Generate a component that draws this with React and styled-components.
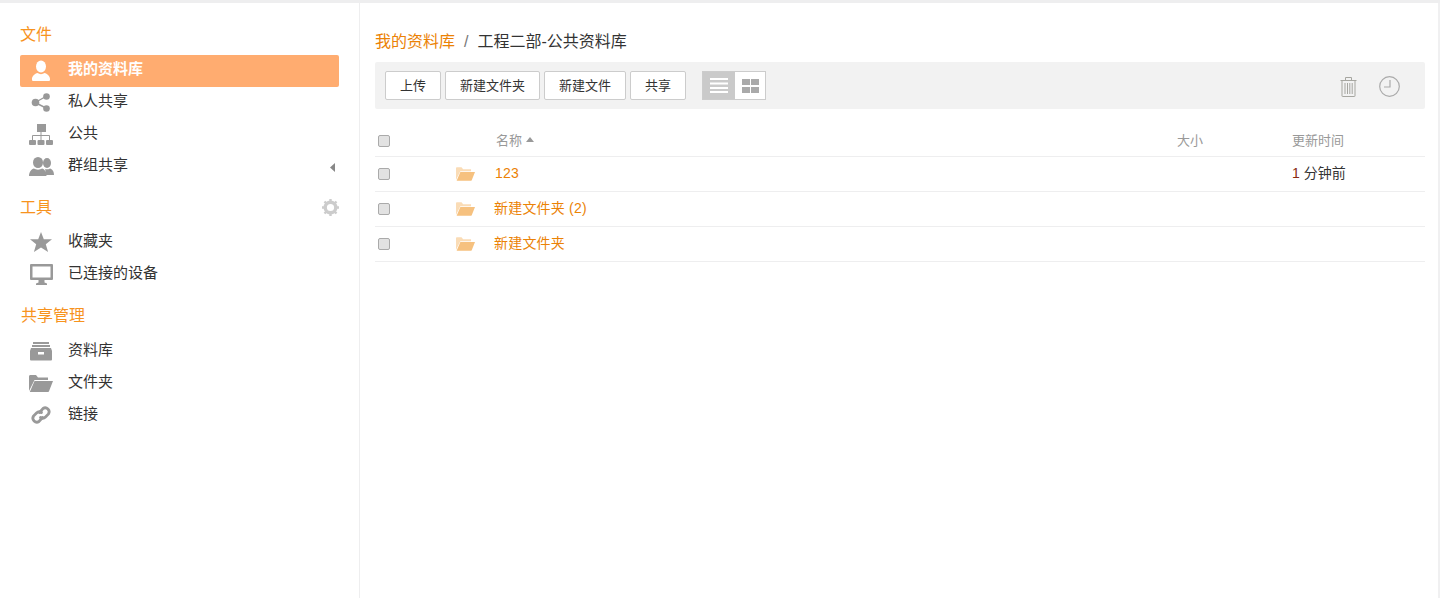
import React from "react";
import styled, { createGlobalStyle } from "styled-components";

const Global = createGlobalStyle`
  html, body { margin: 0; padding: 0; height: 100%; background: #fff; overflow: hidden; }
  body { font-family: "Liberation Sans", "Noto Sans CJK SC", sans-serif; font-size: 14px; color: #333; }
  * { box-sizing: border-box; }
`;

const Page = styled.div`
  height: 598px;
  width: 1440px;
  border-top: 3px solid #eeeeef;
  display: flex;
`;
const Side = styled.aside`
  width: 360px;
  flex: none;
  border-right: 1px solid #eeeeef;
  padding: 20px 20px 0;
`;
const Heading = styled.h3`
  margin: ${p => p.$mt || 0}px 0 ${p => p.$mb || 9}px ${p => p.$ml || 0}px;
  height: 23px;
  line-height: 23px;
  font-size: 16px;
  font-weight: 400;
  color: #f7931e;
  display: flex;
  justify-content: space-between;
  align-items: center;
`;
const Row = styled.div`
  height: 32px;
  display: flex;
  align-items: center;
  border-radius: 2px;
  padding-right: 4px;
  font-size: 15px;
  background: ${p => (p.$active ? "#ffac70" : "transparent")};
  color: ${p => (p.$active ? "#fff" : "#333")};
  font-weight: ${p => (p.$active ? 700 : 400)};
`;
const IconSlot = styled.span`
  width: 48px;
  flex: none;
  display: flex;
  justify-content: center;
  padding: 0 6px 2px 0;
`;
const Label = styled.span`
  flex: 1;
  padding-bottom: 4px;
  line-height: 20px;
`;
const Main = styled.main`
  flex: 1;
  padding: 23px 13px 0 15px;
  border-right: 2px solid #f0f0f1;
  min-width: 0;
`;
const Crumb = styled.div`
  height: 32px;
  line-height: 32px;
  font-size: 16px;
  margin-bottom: 4px;
  color: #333;
`;
const CrumbLink = styled.span`
  color: #eb8205;
`;
const Sep = styled.span`
  color: #777;
  margin: 0 9px;
`;
const Toolbar = styled.div`
  height: 47px;
  background: #f2f2f2;
  border-radius: 2px;
  padding: 9px 25px 0 10px;
  display: flex;
  align-items: flex-start;
`;
const Btn = styled.button`
  height: 29px;
  width: ${p => p.$w}px;
  margin-right: 4px;
  padding: 0 0 2px;
  background: #fff;
  border: 1px solid #ccc;
  border-radius: 2px;
  font: 13px "Liberation Sans", "Noto Sans CJK SC", sans-serif;
  color: #333;
`;
const Toggle = styled.div`
  display: flex;
  margin-left: 12px;
  border: 1px solid #ccc;
  height: 29px;
  background: #fff;
`;
const ToggleCell = styled.span`
  width: ${p => p.$w}px;
  display: flex;
  align-items: center;
  justify-content: center;
  background: ${p => (p.$on ? "#cacaca" : "#fff")};
`;
const Tools = styled.div`
  margin-left: auto;
  display: flex;
  align-items: center;
  gap: 22px;
  height: 31px;
`;
const TableRow = styled.div`
  display: grid;
  grid-template-columns: 78px 39px 682px 115px 1fr;
  align-items: center;
  height: ${p => p.$h || 35}px;
  border-bottom: 1px solid #eeeeef;
  padding-left: 3px;
`;
const HeaderCell = styled.span`
  font-size: 13px;
  color: #999;
  display: flex;
  align-items: center;
  gap: 4px;
  padding-bottom: 3px;
  margin-left: ${p => p.$ml || 0}px;
`;
const Check = styled.span`
  width: 12px;
  height: 12px;
  border: 1px solid #aaa;
  border-radius: 2px;
  background: #e2e2e2;
  display: block;
`;
const Name = styled.span`
  color: #eb8205;
  letter-spacing: .2px;
  margin-left: ${p => (p.$tight ? -1 : 0)}px;
  padding-bottom: ${p => (p.$tight ? 5 : 3)}px;
`;
const Time = styled.span`
  color: #333;
  padding-bottom: 5px;
`;
const Num = styled.span`
  color: #8a2a10;
`;
const HeaderRow = styled(TableRow)`
  margin-top: 15px;
  padding-top: 1px;
`;

const Ic = ({ w = 24, h = 24, vb = "0 0 24 24", children }) => (
  <svg width={w} height={h} viewBox={vb} style={{ display: "block" }}>{children}</svg>
);

const User = () => (
  <Ic w={20} h={21} vb="0 0 20 21">
    <ellipse cx="10" cy="6.500" rx="5" ry="6" fill="#fff" />
    <path d="M1 20c-.4-4 3-6.500 5.500-7 2 1.500 5 1.500 7 0 2.500.5 5.900 3 5.500 7 0 .5-.5 1-1.500 1H2.500C1.500 21 1 20.500 1 20z" fill="#fff" />
  </Ic>
);
const Share = () => (
  <Ic w={20} h={19} vb="0 0 20 19">
    <g fill="#999">
      <circle cx="4.500" cy="9.500" r="3.800" /><circle cx="15.500" cy="3.500" r="3.300" /><circle cx="15.500" cy="15.500" r="3.300" />
    </g>
    <path d="M5 9L14 4M5 10l10 5" stroke="#999" strokeWidth="1.400" />
  </Ic>
);
const Org = () => (
  <Ic w={24} h={21} vb="0 0 24 21">
    <g fill="#999">
      <rect x="8" y="0" width="9" height="8" />
      <rect x="0" y="16" width="7" height="5" rx="1" /><rect x="8.500" y="16" width="7" height="5" rx="1" /><rect x="17" y="16" width="7" height="5" rx="1" />
    </g>
    <path d="M3.500 16v-4.500h17V16M12 8v8" fill="none" stroke="#999" strokeWidth="1" />
  </Ic>
);
const Group = () => (
  <Ic w={25} h={19} vb="0 0 25 19">
    <g fill="#999">
      <ellipse cx="18" cy="6" rx="4" ry="5" />
      <path d="M15 18h10c0-4-2-6-4-6.500-1.500 1-4 1-5 .5 1 2 0 4-1 6z" />
      <ellipse cx="9" cy="5.500" rx="5" ry="5.500" />
      <path d="M0 19c0-4 2.500-7 5-7.500 2 1.500 6 1.500 8 0 2.500.5 4.500 3.500 4.500 7.500z" />
    </g>
  </Ic>
);
const Star = () => (
  <Ic w={22} h={20} vb="0 0 22 20"><path d="M11 0l2.800 7.200H22l-6.200 5 2.300 7.800L11 15.500 3.900 20l2.300-7.800L0 7.200h8.200z" fill="#999" /></Ic>
);
const Monitor = () => (
  <Ic w={23} h={21} vb="0 0 23 21">
    <path d="M1 0h21a1 1 0 0 1 1 1v14a1 1 0 0 1-1 1h-7.500v2.500l2.500 1V21H6v-1.500l2.500-1V16H1a1 1 0 0 1-1-1V1a1 1 0 0 1 1-1zm1.500 2.500v11h18v-11z" fill="#999" fillRule="evenodd" />
  </Ic>
);
const Archive = () => (
  <Ic w={22} h={19} vb="0 0 22 19">
    <g fill="#999">
      <rect x="3" y="0" width="16" height="2" />
      <rect x="2" y="3" width="18" height="2" />
      <path d="M1 6h20l1 3v8.500a1 1 0 0 1-1 1H1a1 1 0 0 1-1-1V9z" />
    </g>
    <rect x="8" y="10" width="6" height="2.500" fill="#fff" />
  </Ic>
);
const FolderOpen = ({ color = "#999", hi = "#999", w = 24, h = 17 }) => (
  <Ic w={w} h={h} vb="0 0 24 17">
    <path d="M0 16V1.500C0 .7.500 0 1.500 0H7l2 2.500h10V5H5.500z" fill={hi} />
    <path d="M5.500 6H24l-4 10.200a1 1 0 0 1-1 .8H0.800z" fill={color} />
  </Ic>
);
const Link = () => (
  <Ic w={22} h={22} vb="0 0 22 22">
    <g fill="none" stroke="#999" strokeWidth="2.800" strokeLinecap="round">
      <path d="M9.500 8.500l3.500-4a4 4 0 0 1 5.500 5.500l-3 3a4 4 0 0 1-5 .5" />
      <path d="M12.500 13.500l-3.500 4A4 4 0 0 1 3.500 12l3-3a4 4 0 0 1 5-.5" />
    </g>
  </Ic>
);
const Gear = () => (
  <Ic w={17} h={17} vb="0 0 17 17">
    <circle cx="8.500" cy="8.500" r="5.300" fill="none" stroke="#ccc" strokeWidth="3.400" />
    <path d="M8.500 0v17M0 8.500h17M2.500 2.500l12 12M14.500 2.500l-12 12" stroke="#ccc" strokeWidth="2.400" strokeDasharray="2.600 11.800 2.600" />
  </Ic>
);
const Caret = () => (
  <Ic w={5} h={9} vb="0 0 5 9"><path d="M5 0v9L0 4.500z" fill="#888" /></Ic>
);
const ListIc = () => (
  <Ic w={18} h={15} vb="0 0 18 15">
    <path d="M0 1h18M0 5.500h18M0 10h18M0 14h18" stroke="#fff" strokeWidth="2" />
  </Ic>
);
const GridIc = () => (
  <Ic w={17} h={14} vb="0 0 17 14">
    <g fill="#aaa">
      <rect x="0" y="0" width="8" height="6" /><rect x="9" y="0" width="8" height="6" />
      <rect x="0" y="8" width="8" height="6" /><rect x="9" y="8" width="8" height="6" />
    </g>
  </Ic>
);
const Trash = () => (
  <Ic w={17} h={20} vb="0 0 17 20">
    <g fill="none" stroke="#a6a6a0" strokeWidth="1">
      <path d="M.5 3.500h16M5.500 3.500V.5h6v3" />
      <path d="M2 3.500v15.500a.5.5 0 0 0 .5.500h12a.5.5 0 0 0 .5-.5V3.500" />
      <path d="M5 6v11M7.500 6v11M9.800 6v11M12.200 6v11" />
    </g>
  </Ic>
);
const Clock = () => (
  <Ic w={21} h={21} vb="0 0 21 21">
    <circle cx="10.500" cy="10.500" r="9.800" fill="none" stroke="#aaa" strokeWidth="1.200" />
    <path d="M11 4v7H5" fill="none" stroke="#aaa" strokeWidth="1.200" />
  </Ic>
);
const SortUp = () => (
  <Ic w={8} h={5} vb="0 0 8 5"><path d="M4 0l4 5H0z" fill="#999" /></Ic>
);

const folderIcon = (
  <FolderOpen color="#f6c17f" hi="#fadcb6" w={19} h={14} />
);
const files = [
  { name: "123", time: <><Num>1</Num> 分钟前</> },
  { name: "新建文件夹 (2)", tight: true },
  { name: "新建文件夹", tight: true },
];

export default function App() {
  return (
    <>
      <Global />
      <Page>
        <Side>
          <Heading>文件</Heading>
          <Row $active><IconSlot><User /></IconSlot><Label>我的资料库</Label></Row>
          <Row><IconSlot><Share /></IconSlot><Label>私人共享</Label></Row>
          <Row><IconSlot><Org /></IconSlot><Label>公共</Label></Row>
          <Row><IconSlot><Group /></IconSlot><Label>群组共享</Label><Caret /></Row>
          <Heading $mt={13} $mb={8}>工具<Gear /></Heading>
          <Row><IconSlot><Star /></IconSlot><Label>收藏夹</Label></Row>
          <Row><IconSlot><Monitor /></IconSlot><Label>已连接的设备</Label></Row>
          <Heading $mt={13} $mb={9} $ml={1}>共享管理</Heading>
          <Row><IconSlot><Archive /></IconSlot><Label>资料库</Label></Row>
          <Row><IconSlot><FolderOpen /></IconSlot><Label>文件夹</Label></Row>
          <Row><IconSlot><Link /></IconSlot><Label>链接</Label></Row>
        </Side>
        <Main>
          <Crumb><CrumbLink>我的资料库</CrumbLink><Sep>/</Sep>工程二部-公共资料库</Crumb>
          <Toolbar>
            <Btn $w={56}>上传</Btn>
            <Btn $w={95}>新建文件夹</Btn>
            <Btn $w={82}>新建文件</Btn>
            <Btn $w={56}>共享</Btn>
            <Toggle>
              <ToggleCell $w={32} $on><ListIc /></ToggleCell>
              <ToggleCell $w={30}><GridIc /></ToggleCell>
            </Toggle>
            <Tools><Trash /><Clock /></Tools>
          </Toolbar>
          <HeaderRow $h={33}>
            <Check />
            <span />
            <HeaderCell $ml={1}>名称 <SortUp /></HeaderCell>
            <HeaderCell>大小</HeaderCell>
            <HeaderCell>更新时间</HeaderCell>
          </HeaderRow>
          {files.map(f => (
            <TableRow key={f.name}>
              <Check />
              <span>{folderIcon}</span>
              <Name $tight={f.tight}>{f.name}</Name>
              <span />
              <Time>{f.time}</Time>
            </TableRow>
          ))}
        </Main>
      </Page>
    </>
  );
}
